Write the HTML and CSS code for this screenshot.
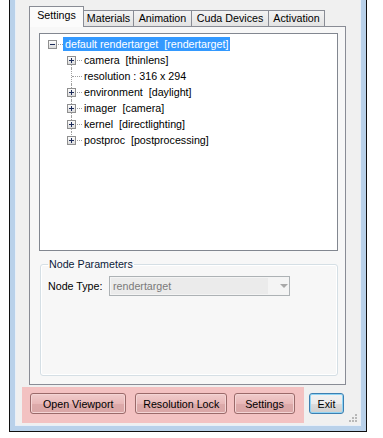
FILE: index.html
```html
<!DOCTYPE html>
<html lang="en">
<head>
    <meta charset="UTF-8">
    <title>Render Settings</title>
    <link rel="stylesheet" href="styles.css">
</head>
<body>
    <div class="window">
        <div class="form">
            <div class="tabs">
                <div class="tabstrip">
                    <div class="tab selected" style="width:55px">Settings</div>
                    <div class="tab" style="width:51px">Materials</div>
                    <div class="tab" style="width:59px">Animation</div>
                    <div class="tab" style="width:78px">Cuda Devices</div>
                    <div class="tab" style="width:57px">Activation</div>
                </div>
                <div class="tabpage">
                    <div class="tree">
                        <div class="row root">
                            <span class="exp"><svg width="9" height="9" viewBox="0 0 9 9"><rect x="0.5" y="0.5" width="8" height="8" fill="url(#boxfill)" stroke="#8f8f8f"/><path d="M2 4.5h5" stroke="#1c2b5a"/><defs><linearGradient id="boxfill" x1="0" y1="0" x2="0" y2="1"><stop offset="0" stop-color="#ffffff"/><stop offset="1" stop-color="#d8d8d8"/></linearGradient></defs></svg></span>
                            <span class="label sel">default rendertarget  [rendertarget]</span>
                        </div>
                        <div class="children">
                            <div class="row item first">
                                <span class="exp"><svg width="9" height="9" viewBox="0 0 9 9"><rect x="0.5" y="0.5" width="8" height="8" fill="url(#boxfill)" stroke="#8f8f8f"/><path d="M2 4.5h5M4.5 2v5" stroke="#1c2b5a"/></svg></span>
                                <span class="label">camera  [thinlens]</span>
                            </div>
                            <div class="row item">
                                <span class="exp"></span>
                                <span class="label">resolution : 316 x 294</span>
                            </div>
                            <div class="row item">
                                <span class="exp"><svg width="9" height="9" viewBox="0 0 9 9"><rect x="0.5" y="0.5" width="8" height="8" fill="url(#boxfill)" stroke="#8f8f8f"/><path d="M2 4.5h5M4.5 2v5" stroke="#1c2b5a"/></svg></span>
                                <span class="label">environment  [daylight]</span>
                            </div>
                            <div class="row item">
                                <span class="exp"><svg width="9" height="9" viewBox="0 0 9 9"><rect x="0.5" y="0.5" width="8" height="8" fill="url(#boxfill)" stroke="#8f8f8f"/><path d="M2 4.5h5M4.5 2v5" stroke="#1c2b5a"/></svg></span>
                                <span class="label">imager  [camera]</span>
                            </div>
                            <div class="row item">
                                <span class="exp"><svg width="9" height="9" viewBox="0 0 9 9"><rect x="0.5" y="0.5" width="8" height="8" fill="url(#boxfill)" stroke="#8f8f8f"/><path d="M2 4.5h5M4.5 2v5" stroke="#1c2b5a"/></svg></span>
                                <span class="label">kernel  [directlighting]</span>
                            </div>
                            <div class="row item last">
                                <span class="exp"><svg width="9" height="9" viewBox="0 0 9 9"><rect x="0.5" y="0.5" width="8" height="8" fill="url(#boxfill)" stroke="#8f8f8f"/><path d="M2 4.5h5M4.5 2v5" stroke="#1c2b5a"/></svg></span>
                                <span class="label">postproc  [postprocessing]</span>
                            </div>
                        </div>
                    </div>
                    <fieldset class="group">
                        <legend>Node Parameters</legend>
                        <div class="field">
                            <label class="field-label">Node Type:</label>
                            <div class="combo">
                                <div class="combo-text">rendertarget</div>
                                <div class="combo-arrow"></div>
                            </div>
                        </div>
                    </fieldset>
                </div>
            </div>
            <div class="bottom">
                <div class="actions">
                    <button class="pink" style="width:98px">Open Viewport</button>
                    <button class="pink" style="width:93px">Resolution Lock</button>
                    <button class="pink" style="width:62px">Settings</button>
                </div>
                <button class="exit">Exit</button>
                <svg class="grip" width="10" height="10" viewBox="0 0 10 10">
                    <g fill="#b8b8b8">
                        <rect x="7" y="1" width="2" height="2"/>
                        <rect x="4" y="4" width="2" height="2"/>
                        <rect x="7" y="4" width="2" height="2"/>
                        <rect x="1" y="7" width="2" height="2"/>
                        <rect x="4" y="7" width="2" height="2"/>
                        <rect x="7" y="7" width="2" height="2"/>
                    </g>
                </svg>
            </div>
        </div>
    </div>
</body>
</html>
```

FILE: styles.css
```css
* {
    box-sizing: border-box;
}

body {
    margin: 0;
    background: #fff;
    font-family: "Liberation Sans", Arial, sans-serif;
    font-size: 10.7px;
    color: #000;
}

.window {
    margin-left: 9px;
    width: 358px;
    height: 432px;
    border: 1px solid #101010;
    border-top: none;
    padding: 0 5px 5px;
    background: #b9d1ea;
}

.form {
    height: 426px;
    border: 1px solid #e8eff8;
    border-top: none;
    background: #f0f0f0;
    padding-top: 6px;
}

.tabs {
    margin-left: 13px;
    width: 317px;
}

.tabstrip {
    display: flex;
    align-items: flex-end;
    height: 20px;
}

.tab {
    height: 16px;
    line-height: 15px;
    text-align: center;
    border: 1px solid #898c95;
    border-bottom: none;
    margin-right: -1px;
    background: linear-gradient(#f3f3f3, #e3e3e3);
    white-space: nowrap;
}

.tab.selected {
    position: relative;
    height: 21px;
    line-height: 17px;
    margin-bottom: -1px;
    background: #fbfbfb;
    z-index: 1;
}

.tabpage {
    border: 1px solid #898c95;
    background: #f7f7f7;
    padding: 6px 7px 8px 9px;
}

.tree {
    height: 218px;
    border: 1px solid #828790;
    background: #fff;
    padding: 2px 0 0 3px;
}

.row {
    display: flex;
    height: 16px;
    align-items: flex-start;
}

.exp {
    position: relative;
    width: 20px;
    height: 16px;
    flex-shrink: 0;
    padding: 4px 0 0 5px;
}

.exp svg {
    position: relative;
    display: block;
    z-index: 1;
}

.exp::after {
    content: "";
    position: absolute;
    left: 10px;
    top: 8px;
    width: 10px;
    border-top: 1px dotted #a0a0a0;
}

.item .exp::before {
    content: "";
    position: absolute;
    left: 9px;
    top: 0;
    bottom: 0;
    border-left: 1px dotted #a0a0a0;
}

.item.first .exp::before {
    top: 9px;
}

.item.last .exp::before {
    bottom: 7px;
}

.children {
    margin-left: 19px;
}

.label {
    margin-top: 1px;
    padding: 0 2px;
    height: 14px;
    line-height: 14px;
    white-space: pre;
}

.label.sel {
    background: #3399ff;
    color: #fff;
}

.group {
    margin: 7px 0 0 1px;
    width: 298px;
    border: 1px solid #d5dfe5;
    border-radius: 3px;
    box-shadow: inset 0 0 0 1px #fff;
    padding: 5px 7px 79px;
    min-width: 0;
}

.group legend {
    padding: 0 1px;
    line-height: 13px;
    color: #0b1a3a;
}

.field {
    display: flex;
    align-items: center;
    height: 20px;
}

.field-label {
    width: 61px;
}

.combo {
    display: flex;
    width: 181px;
    height: 20px;
    border: 1px solid #adb2b5;
    background: #f4f4f4;
    padding: 1px;
}

.combo-text {
    width: 158px;
    height: 16px;
    line-height: 16px;
    padding-left: 2px;
    background: #ebebeb;
    color: #7a7a7a;
}

.combo-arrow {
    margin: 6px 0 0 12px;
    width: 0;
    height: 0;
    border-left: 4px solid transparent;
    border-right: 4px solid transparent;
    border-top: 4px solid #a8a8a8;
}

.bottom {
    display: flex;
    align-items: flex-start;
    height: 40px;
}

.actions {
    display: flex;
    margin: 2px 0 0 6px;
    width: 282px;
    height: 36px;
    padding: 6px 0 0 8px;
    background: #f3c2c2;
}

button {
    font-family: "Liberation Sans", Arial, sans-serif;
    font-size: 10.7px;
    color: #000;
    height: 21px;
    padding: 0;
    cursor: pointer;
}

.pink {
    border: 1px solid #9a6a6a;
    border-radius: 3px;
    background: linear-gradient(#f0cccc, #e8b8b8 50%, #ddaaaa 51%, #d9a6a6);
    box-shadow: inset 0 0 0 1px #f4d4d4;
    margin-right: 9px;
}

.pink:nth-child(2) {
    margin-right: 7px;
}

.exit {
    margin: 8px 0 0 5px;
    width: 35px;
    border: 1px solid #3c7fb1;
    border-radius: 3px;
    background: linear-gradient(#f2f2f2, #ebebeb 50%, #dddddd 51%, #cfcfcf);
    box-shadow: inset 0 0 0 1px #8fd4f5;
}

.grip {
    margin: auto 2px 2px auto;
}
```
